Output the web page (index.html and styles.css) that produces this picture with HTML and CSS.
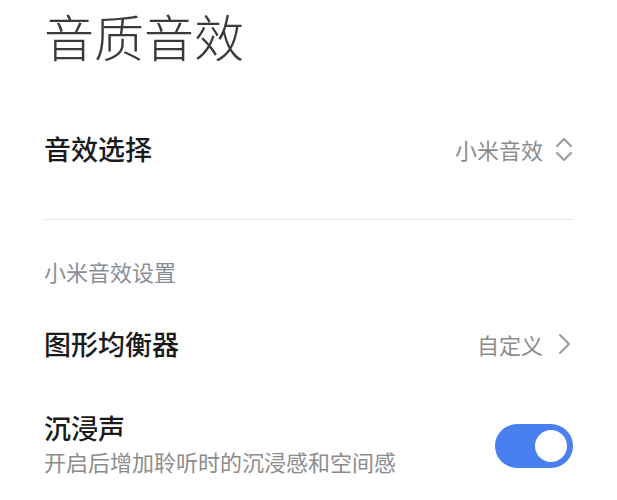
FILE: index.html
```html
<!DOCTYPE html>
<html lang="zh-CN">
<head>
  <meta charset="UTF-8">
  <title>音质音效</title>
  <link rel="stylesheet" href="styles.css">
</head>
<body>
  <div class="page">
    <!-- Header -->
    <h1 class="title">音质音效</h1>

    <!-- Effect picker -->
    <div class="row row-picker">
      <div class="row-label">音效选择</div>
      <div class="row-value">
        <span>小米音效</span>
        <svg class="icon" width="18" height="26" viewBox="0 0 18 26">
          <path d="M2 10 L9 3 L16 10" fill="none" stroke="#9a9a9a" stroke-width="2" stroke-linecap="round" stroke-linejoin="round"/>
          <path d="M2 17 L9 24 L16 17" fill="none" stroke="#9a9a9a" stroke-width="2" stroke-linecap="round" stroke-linejoin="round"/>
        </svg>
      </div>
    </div>

    <div class="divider"></div>

    <!-- Mi sound settings -->
    <div class="section-title">小米音效设置</div>

    <div class="row row-eq">
      <div class="row-label">图形均衡器</div>
      <div class="row-value">
        <span>自定义</span>
        <svg class="icon" width="18" height="22" viewBox="0 0 18 22">
          <path d="M5 2 L14 11 L5 20" fill="none" stroke="#9a9a9a" stroke-width="2" stroke-linecap="round" stroke-linejoin="round"/>
        </svg>
      </div>
    </div>

    <div class="row row-toggle">
      <div class="row-text">
        <div class="row-label">沉浸声</div>
        <div class="row-sub">开启后增加聆听时的沉浸感和空间感</div>
      </div>
      <div class="switch on">
        <div class="knob"></div>
      </div>
    </div>
  </div>
</body>
</html>
```

FILE: styles.css
```css
* {
  margin: 0;
  padding: 0;
  box-sizing: border-box;
}

html, body {
  background: #fff;
  font-family: "Noto Sans CJK SC", "Noto Sans", sans-serif;
  color: #1a1a1a;
}

.page {
  padding: 0 44px 0 44px;
}

/* Header */
.title {
  font-size: 50px;
  font-weight: 300;
  line-height: 70px;
  height: 70px;
  color: #3a3a3a;
}

/* Rows */
.row {
  display: flex;
  align-items: center;
  justify-content: space-between;
}

.row-picker {
  height: 90px;
  margin-top: 34px;
}

.row-label {
  font-size: 27px;
  font-weight: 500;
  line-height: 36px;
  color: #1a1a1a;
}

.row-value {
  display: flex;
  align-items: center;
  gap: 12px;
  font-size: 22px;
  color: #8c8c8c;
  line-height: 30px;
}

.icon {
  display: block;
}

.divider {
  height: 1px;
  background: #e6e6e6;
  margin-top: 25px;
  width: 529px;
}

.section-title {
  font-size: 22px;
  line-height: 40px;
  color: #8a8d99;
  margin-top: 31px;
}

.row-eq {
  height: 80px;
  margin-top: 13px;
}

.row-toggle {
  padding-top: 26px;
}

.row-sub {
  font-size: 22px;
  line-height: 30px;
  color: #8c8c8c;
}

/* Switch */
.switch {
  width: 78px;
  height: 44px;
  border-radius: 22px;
  background: #ccc;
  position: relative;
  margin-top: 6px;
}

.switch.on {
  background: #4a7ff0;
}

.knob {
  position: absolute;
  top: 6px;
  right: 6px;
  width: 32px;
  height: 32px;
  border-radius: 50%;
  background: #fff;
}
```
